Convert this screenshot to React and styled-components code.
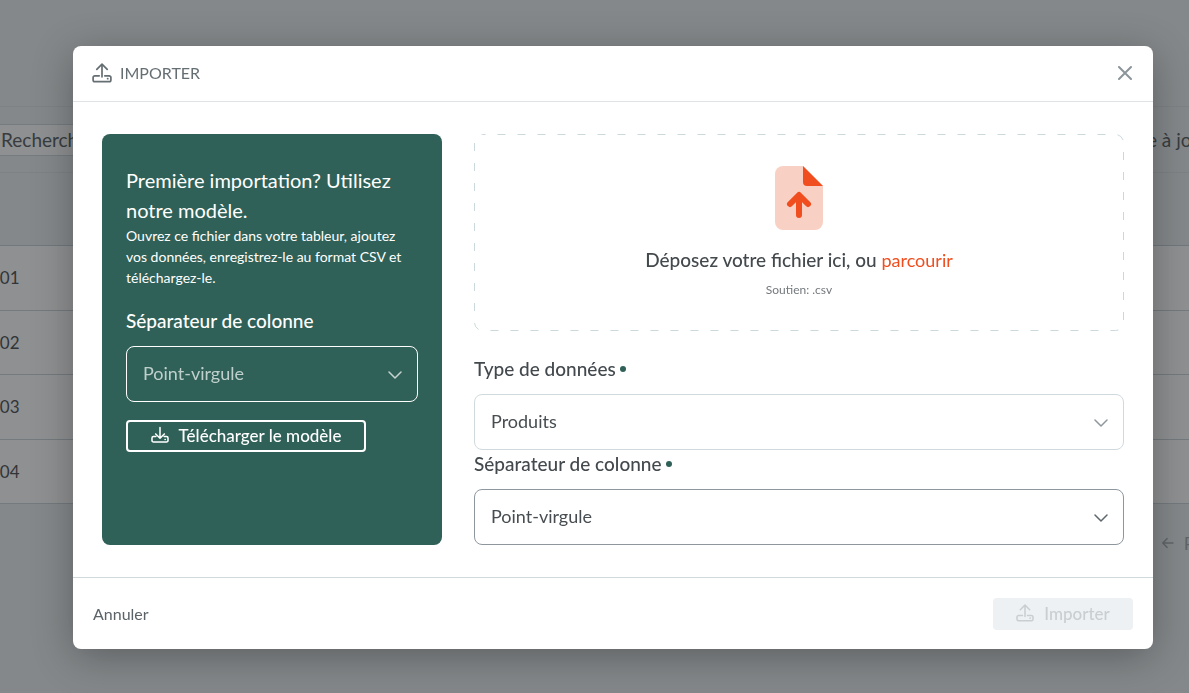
import React from 'react';
import styled, { createGlobalStyle } from 'styled-components';

const rows = ['001', '002', '003', '004'];

const UploadIcon = ({ size = 20 }) => (
  <Icon width={size} height={size} viewBox='0 0 20 20' aria-hidden='true'>
    <path d='M10 13.8V1.4M4.8 6.4L10 1.2l5.2 5.2' />
    <path d='M7.2 12.8H2.8a1.7 1.7 0 0 0-1.7 1.7v2.4a1.7 1.7 0 0 0 1.7 1.7h14.4a1.7 1.7 0 0 0 1.7-1.7v-2.4a1.7 1.7 0 0 0-1.7-1.7h-4.4' />
    <path d='M15.6 15.7h.2' />
  </Icon>
);

const DownloadIcon = ({ size = 18 }) => (
  <Icon width={size} height={size} viewBox='0 0 20 20' aria-hidden='true'>
    <path d='M10 1.6v11.8M5.2 8.8l4.8 4.8 4.8-4.8' />
    <path d='M5.4 11.6H2.8a1.7 1.7 0 0 0-1.7 1.7v2.8a1.7 1.7 0 0 0 1.7 1.7h14.4a1.7 1.7 0 0 0 1.7-1.7v-2.8a1.7 1.7 0 0 0-1.7-1.7h-2.6' />
    <path d='M15.6 14.9h.2' />
  </Icon>
);

const FileIcon = () => (
  <svg width='48' height='64' viewBox='0 0 48 64' aria-hidden='true'>
    <path
      d='M8 0h20l20 20v36a8 8 0 0 1-8 8H8a8 8 0 0 1-8-8V8a8 8 0 0 1 8-8z'
      fill='#f9d1c4'
    />
    <path d='M28 0l20 20H32a4 4 0 0 1-4-4z' fill='#f04e1e' />
    <path
      d='M24 49V30M15 38l9-9 9 9'
      fill='none'
      stroke='#f04e1e'
      strokeWidth='6'
      strokeLinecap='round'
      strokeLinejoin='round'
    />
  </svg>
);

const SelectField = ({ id, label, options, tone, required }) => (
  <Field>
    <Label htmlFor={id}>
      {label}
      {required && <Dot />}
    </Label>
    <SelectBox $tone={tone}>
      <Select id={id} $tone={tone}>
        {options.map(option => (
          <option key={option}>{option}</option>
        ))}
      </Select>
      <Chevron width='14' height='8' viewBox='0 0 14 8' aria-hidden='true'>
        <path d='M1 1l6 6 6-6' />
      </Chevron>
    </SelectBox>
  </Field>
);

const App = () => (
  <>
    <GlobalStyle />
    <Viewport>
      <Page>
        <Toolbar>
          <Search type='text' placeholder='Rechercher' aria-label='Rechercher' />
          <Refresh type='button'>Mise à jour</Refresh>
        </Toolbar>
        <Table>
          <thead>
            <tr>
              <th aria-label='Référence' />
            </tr>
          </thead>
          <tbody>
            {rows.map(row => (
              <tr key={row}>
                <td>{row}</td>
              </tr>
            ))}
          </tbody>
        </Table>
        <Pagination>
          <PageButton type='button'>
            <svg width='12' height='12' viewBox='0 0 12 12' aria-hidden='true'>
              <path d='M11.5 6H1M5.5 1.2L.8 6l4.7 4.8' />
            </svg>
            Précédent
          </PageButton>
        </Pagination>
      </Page>
    </Viewport>
    <Backdrop>
      <Modal role='dialog' aria-modal='true' aria-labelledby='import-title'>
        <Header>
          <UploadIcon />
          <Title id='import-title'>IMPORTER</Title>
          <Close type='button' aria-label='Fermer'>
            <svg width='14' height='14' viewBox='0 0 14 14' aria-hidden='true'>
              <path d='M1 1l12 12M13 1L1 13' />
            </svg>
          </Close>
        </Header>
        <Body>
          <Template>
            <TemplateTitle>
              Première importation? Utilisez notre modèle.
            </TemplateTitle>
            <TemplateText>
              Ouvrez ce fichier dans votre tableur, ajoutez vos données,
              enregistrez-le au format CSV et téléchargez-le.
            </TemplateText>
            <SelectField
              id='template-separator'
              label='Séparateur de colonne'
              options={['Point-virgule', 'Virgule']}
              tone='light'
            />
            <Download type='button'>
              <DownloadIcon />
              Télécharger le modèle
            </Download>
          </Template>
          <Form>
            <DropZone>
              <Dashes aria-hidden='true'>
                <rect />
              </Dashes>
              <FileIcon />
              <DropText>
                Déposez votre fichier ici, ou{' '}
                <Browse type='button'>parcourir</Browse>
              </DropText>
              <Support>Soutien: .csv</Support>
            </DropZone>
            <Fields>
              <SelectField
                id='data-type'
                label='Type de données'
                options={['Produits', 'Clients']}
                tone='soft'
                required
              />
              <SelectField
                id='file-separator'
                label='Séparateur de colonne'
                options={['Point-virgule', 'Virgule']}
                tone='strong'
                required
              />
            </Fields>
          </Form>
        </Body>
        <Footer>
          <Cancel type='button'>Annuler</Cancel>
          <Submit type='submit' disabled>
            <UploadIcon size={18} />
            Importer
          </Submit>
        </Footer>
      </Modal>
    </Backdrop>
  </>
);

const tones = {
  light: { border: '#ffffff', text: '#bfd0cc', arrow: '#c5d4d0', fill: '#306158' },
  soft: { border: '#d0d9dd', text: '#474d51', arrow: '#8f989d', fill: '#ffffff' },
  strong: { border: '#8e979e', text: '#474d51', arrow: '#5f676c', fill: '#ffffff' },
};

const GlobalStyle = createGlobalStyle`
  * {
    box-sizing: border-box;
  }
  body {
    margin: 0;
    background: #e9eff1;
    color: #43494d;
    font-family: Lato, 'Open Sans', sans-serif;
  }
  button,
  input,
  select {
    font-family: inherit;
  }
`;

const Viewport = styled.div`
  min-height: 100vh;
  overflow: hidden;
`;

/* runs past both sides of the window */
const Page = styled.div`
  margin: 0 -80px 0 -24px;
  padding-top: 106px;
`;

const Toolbar = styled.div`
  display: flex;
  justify-content: space-between;
  align-items: center;
  height: 67px;
  padding: 0 60px 0 12px;
  border-top: 1px solid #dce3e6;
  border-bottom: 1px solid #dce3e6;
`;

const Search = styled.input`
  width: 240px;
  height: 32px;
  padding: 0 12px;
  border: 1px solid #cad7dd;
  background: #fff;
  color: #43494d;
  font-size: 19px;

  &::placeholder {
    color: #50575b;
    opacity: 1;
  }
`;

const Refresh = styled.button`
  padding: 0;
  border: 0;
  background: none;
  color: #50575b;
  font-size: 19px;
`;

const Table = styled.table`
  width: 100%;
  height: 331px;
  border-spacing: 0;

  th {
    height: 73px;
    border-bottom: 1px solid #c2d0d8;
  }
  td {
    padding: 0 14px;
    border-bottom: 1px solid #c8d2d8;
    background: #fff;
    font-size: 17px;
  }
`;

const Pagination = styled.div`
  display: flex;
  justify-content: flex-end;
  padding: 28px 5px;
`;

const PageButton = styled.button`
  display: flex;
  align-items: center;
  gap: 10px;
  padding: 0;
  border: 0;
  background: none;
  color: #a2a9ad;
  font-size: 18px;

  path {
    fill: none;
    stroke: currentColor;
    stroke-width: 1.5;
  }
`;

const Backdrop = styled.div`
  position: fixed;
  inset: 0;
  display: flex;
  align-items: flex-start;
  padding: 46px 36px 44px 73px;
  background: rgba(32, 34, 36, 0.5);
`;

const Modal = styled.section`
  flex: 1;
  border-radius: 8px;
  background: #fff;
  box-shadow: 0 8px 40px rgba(0, 0, 0, 0.3);
`;

const Header = styled.header`
  display: flex;
  align-items: center;
  gap: 8px;
  height: 56px;
  padding: 0 20px 2px 19px;
  border-bottom: 1px solid #dde3e6;
  color: #656e73;
`;

const Title = styled.h1`
  flex: 1;
  margin: 0;
  font-size: 16px;
  font-weight: 400;
  line-height: 20px;
`;

const Icon = styled.svg`
  flex: none;
  fill: none;
  stroke: currentColor;
  stroke-width: 1.7;
  stroke-linecap: round;
  stroke-linejoin: round;
`;

const Close = styled.button`
  display: flex;
  padding: 1px;
  border: 0;
  background: none;
  color: #8b959a;

  path {
    stroke: currentColor;
    stroke-width: 2;
    stroke-linecap: round;
  }
`;

const Body = styled.div`
  display: grid;
  grid-template-columns: 340px 1fr;
  gap: 32px;
  padding: 32px 29px;
`;

const Template = styled.aside`
  padding: 31px 24px;
  border-radius: 8px;
  background: #306158;
  color: #fff;
`;

const TemplateTitle = styled.h2`
  margin: 0;
  font-size: 20px;
  font-weight: 400;
  line-height: 30px;
`;

const TemplateText = styled.p`
  margin: 0 0 19px;
  font-size: 14px;
  line-height: 21px;
`;

const Field = styled.div`
  display: flex;
  flex-direction: column;
  gap: 12px;
`;

const Label = styled.label`
  display: flex;
  align-items: center;
  gap: 4px;
  font-size: 19px;
  font-weight: 500;
  line-height: 27px;
`;

const Dot = styled.span`
  width: 6px;
  height: 6px;
  border-radius: 50%;
  background: #306158;
`;

const SelectBox = styled.div`
  position: relative;
  color: ${props => tones[props.$tone].arrow};
`;

const Select = styled.select`
  display: block;
  width: 100%;
  height: 56px;
  padding: 0 40px 2px 16px;
  border: 1px solid ${props => tones[props.$tone].border};
  border-radius: 8px;
  appearance: none;
  background: ${props => tones[props.$tone].fill};
  color: ${props => tones[props.$tone].text};
  font-size: 18px;
`;

const Chevron = styled.svg`
  position: absolute;
  top: 25px;
  right: 16px;
  fill: none;
  stroke: currentColor;
  stroke-width: 1.5;
  stroke-linecap: round;
  stroke-linejoin: round;
  pointer-events: none;
`;

const Download = styled.button`
  display: flex;
  justify-content: center;
  align-items: center;
  gap: 10px;
  width: 240px;
  height: 32px;
  margin-top: 18px;
  padding: 0 0 2px;
  border: 2px solid #fff;
  border-radius: 4px;
  background: none;
  color: #fff;
  font-size: 17px;
  font-weight: 500;
`;

const Form = styled.form`
  display: flex;
  flex-direction: column;
  gap: 24px;
`;

const DropZone = styled.div`
  position: relative;
  display: flex;
  flex-direction: column;
  align-items: center;
  padding: 32px;
`;

const Dashes = styled.svg`
  position: absolute;
  inset: 0;
  width: 100%;
  height: 100%;
  pointer-events: none;

  rect {
    x: 0.5px;
    y: 0.5px;
    width: calc(100% - 1px);
    height: calc(100% - 1px);
    rx: 8px;
    fill: none;
    stroke: #cbd9dd;
    stroke-dasharray: 8 12;
    stroke-dashoffset: 5;
  }
`;

const DropText = styled.p`
  margin: 16px 0 8px;
  font-size: 19px;
  font-weight: 500;
  line-height: 27px;
`;

const Browse = styled.button`
  padding: 0;
  border: 0;
  background: none;
  color: #f04e1e;
  font-size: 18px;
  line-height: 20px;
  cursor: pointer;
`;

const Support = styled.small`
  color: #73797d;
  font-size: 12px;
  line-height: 18px;
`;

const Fields = styled.div`
  display: flex;
  flex-direction: column;
`;

const Footer = styled.footer`
  display: flex;
  justify-content: space-between;
  align-items: center;
  padding: 20px 20px 19px;
  border-top: 1px solid #cfd9dc;
`;

const Cancel = styled.button`
  padding: 0 0 2px;
  border: 0;
  background: none;
  color: #5b6368;
  font-size: 16px;
`;

const Submit = styled.button`
  display: flex;
  justify-content: center;
  align-items: center;
  gap: 10px;
  width: 140px;
  height: 32px;
  padding: 0 0 2px;
  border: 0;
  border-radius: 4px;
  background: #edf1f4;
  color: #c9ced1;
  font-size: 17px;
  font-weight: 500;
`;

export default App;
